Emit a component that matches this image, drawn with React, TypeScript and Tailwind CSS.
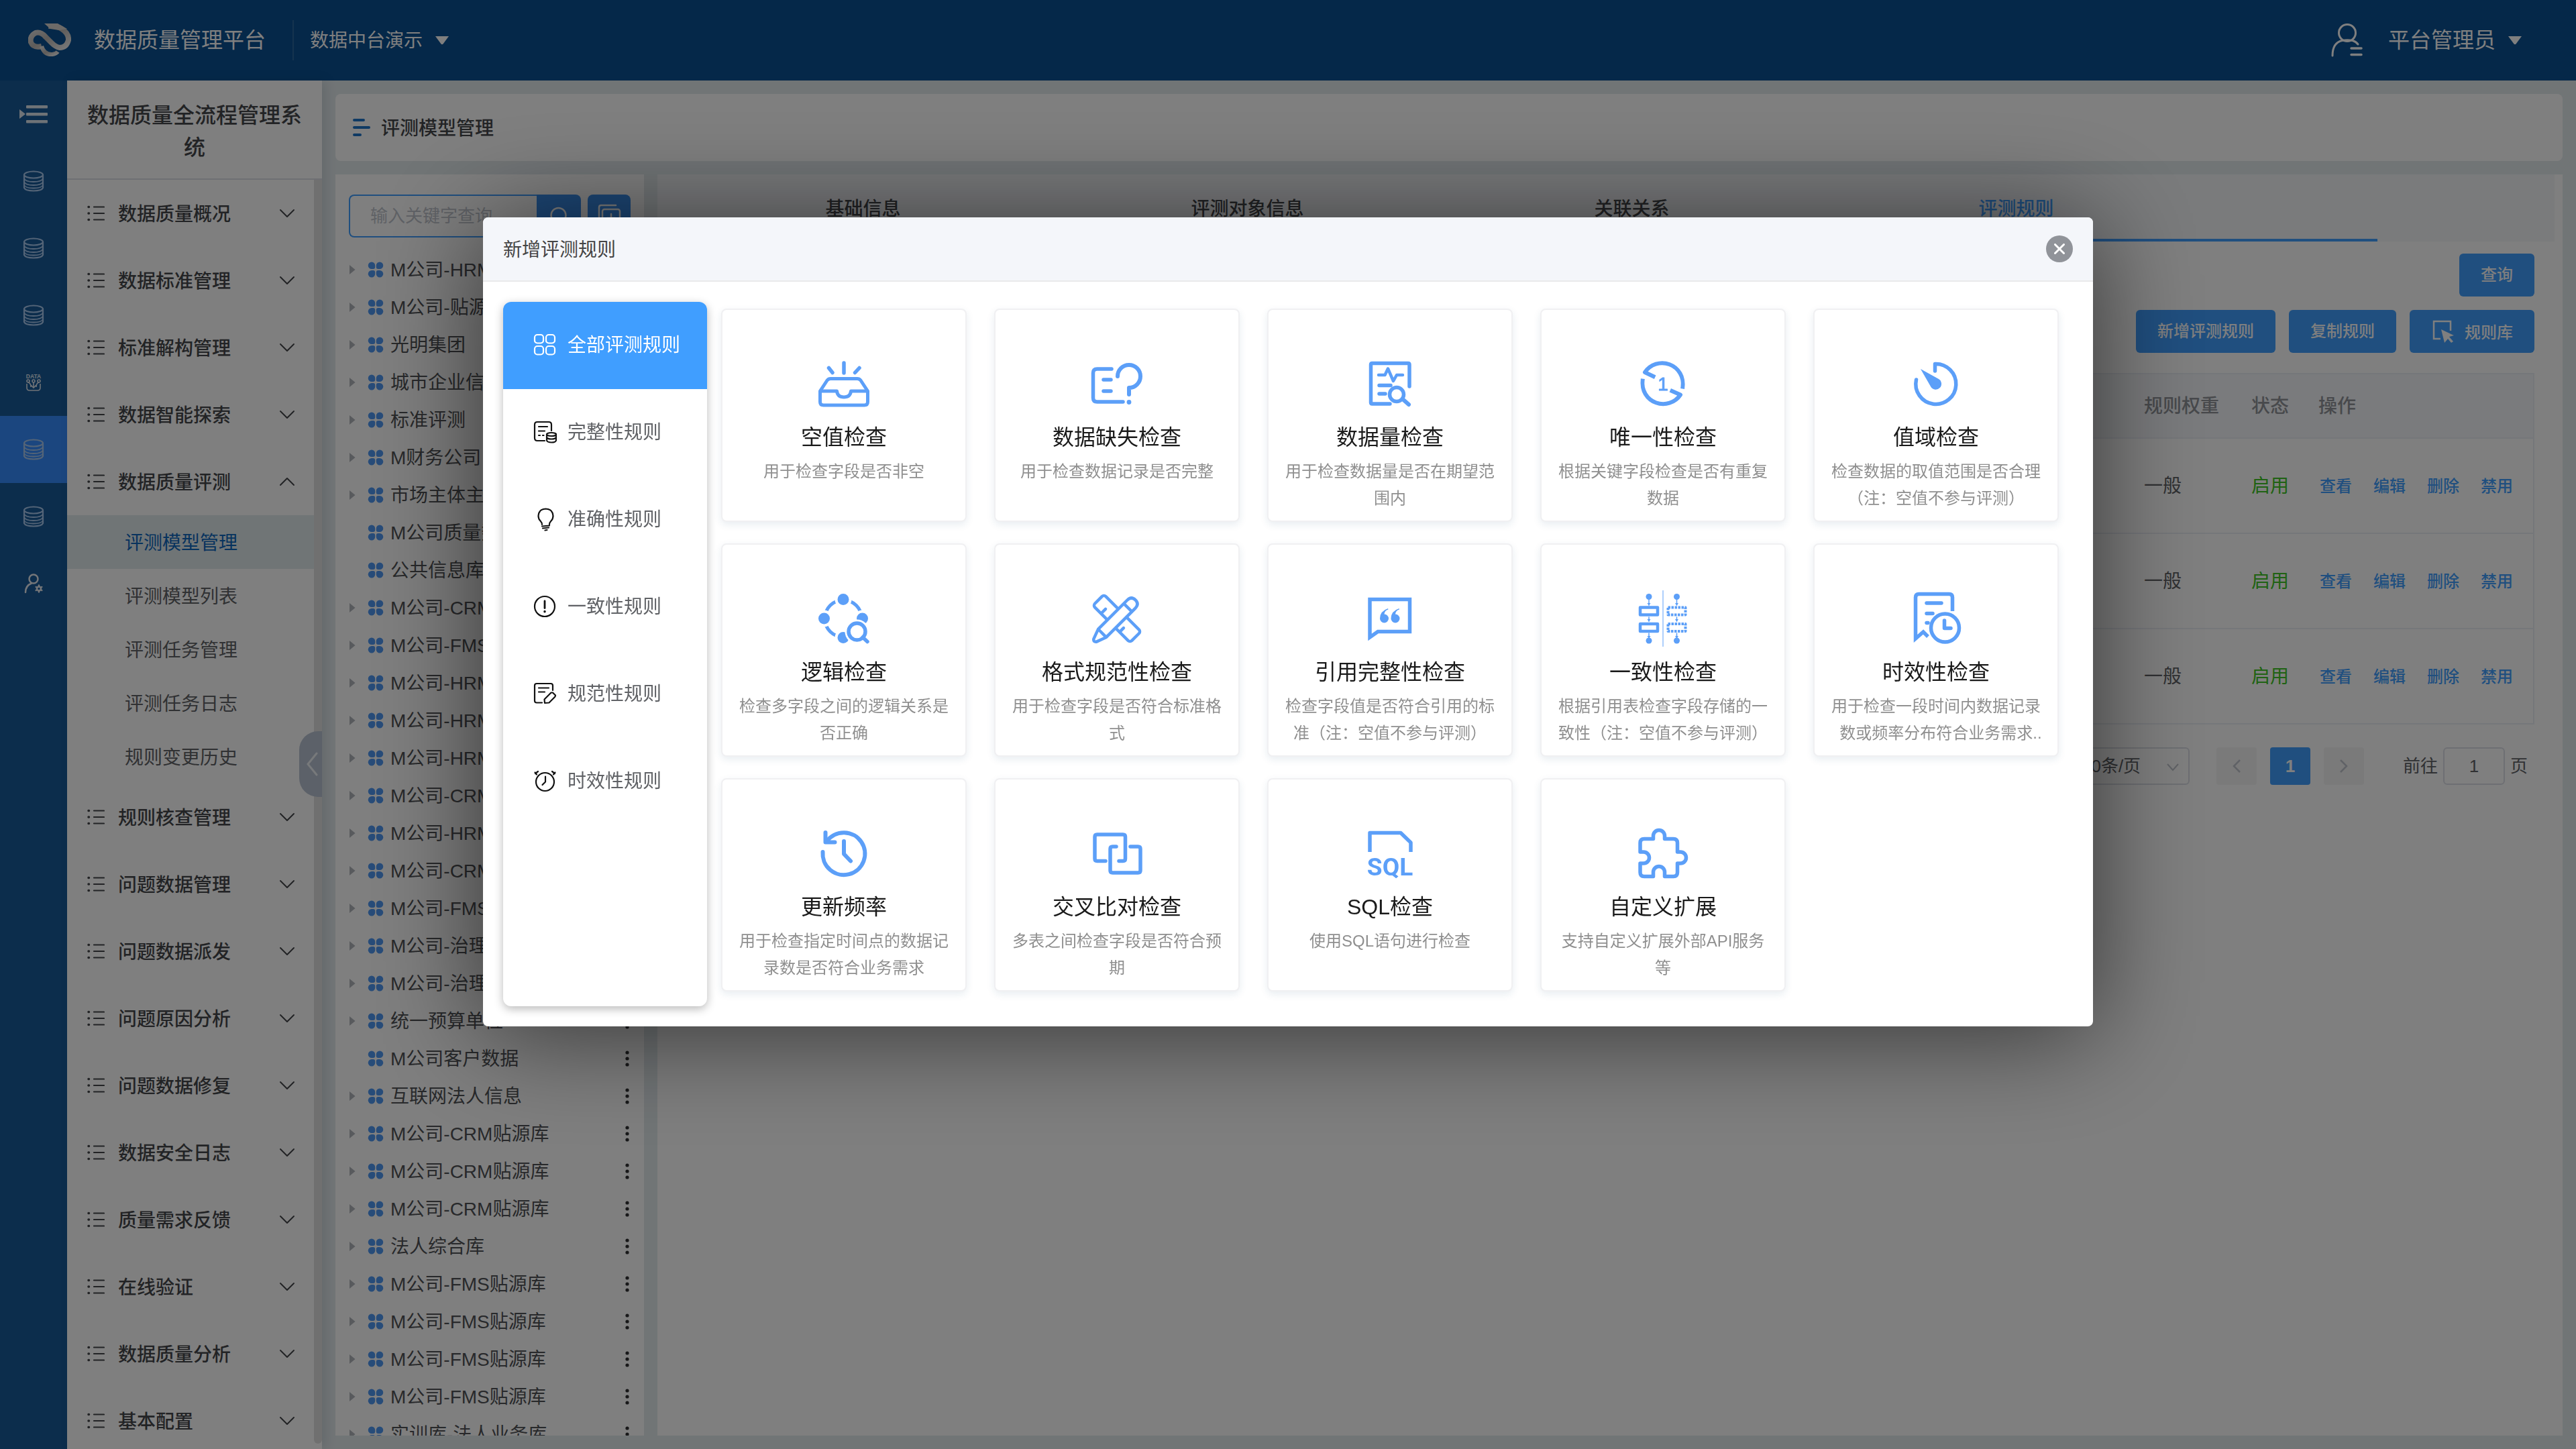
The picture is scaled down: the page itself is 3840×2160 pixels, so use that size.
import { useState, type ReactNode } from "react";
import { clsx, type ClassValue } from "clsx";
import { twMerge } from "tailwind-merge";

function cn(...inputs: ClassValue[]) {
  return twMerge(clsx(inputs));
}

const menuTop = ["数据质量概况", "数据标准管理", "标准解构管理", "数据智能探索"];
const menuBottom = [
  "规则核查管理",
  "问题数据管理",
  "问题数据派发",
  "问题原因分析",
  "问题数据修复",
  "数据安全日志",
  "质量需求反馈",
  "在线验证",
  "数据质量分析",
  "基本配置",
];
const subMenu = ["评测模型管理", "评测模型列表", "评测任务管理", "评测任务日志", "规则变更历史"];

const treeNodes = [
  { name: "M公司-HRM贴源库" },
  { name: "M公司-贴源库" },
  { name: "光明集团" },
  { name: "城市企业信息" },
  { name: "标准评测" },
  { name: "M财务公司" },
  { name: "市场主体主题库" },
  { name: "M公司质量数据", leaf: true },
  { name: "公共信息库", leaf: true },
  { name: "M公司-CRM贴源库" },
  { name: "M公司-FMS贴源库" },
  { name: "M公司-HRM贴源库" },
  { name: "M公司-HRM贴源库" },
  { name: "M公司-HRM贴源库" },
  { name: "M公司-CRM贴源库" },
  { name: "M公司-HRM贴源库" },
  { name: "M公司-CRM贴源库" },
  { name: "M公司-FMS贴源库" },
  { name: "M公司-治理库" },
  { name: "M公司-治理库" },
  { name: "统一预算单位" },
  { name: "M公司客户数据", leaf: true },
  { name: "互联网法人信息" },
  { name: "M公司-CRM贴源库" },
  { name: "M公司-CRM贴源库" },
  { name: "M公司-CRM贴源库" },
  { name: "法人综合库" },
  { name: "M公司-FMS贴源库" },
  { name: "M公司-FMS贴源库" },
  { name: "M公司-FMS贴源库" },
  { name: "M公司-FMS贴源库" },
  { name: "实训库-法人业务库" },
];

/* ---------- small icons ---------- */

function Logo() {
  return (
    <svg viewBox="0 0 64 50" className="h-[50px] w-16" fill="none" strokeLinejoin="round">
      <defs>
        <linearGradient id="logo" x1="0" y1="0" x2="1" y2="1">
          <stop offset="0" stopColor="#e9e9e9" />
          <stop offset="0.5" stopColor="#bdb8b4" />
          <stop offset="1" stopColor="#f0f0f0" />
        </linearGradient>
      </defs>
      <path
        d="M30 4 Q42 3 50 8 Q61 15 60 25 Q57 36 47 36 Q41 35 35 29 L26 20 Q19 12 11 14 Q2 19 4 28 Q8 37 20 34"
        stroke="url(#logo)"
        strokeWidth="8"
      />
      <path d="M20 34 Q24 47 36 46 Q42 45 44 42" stroke="url(#logo)" strokeWidth="6" />
      <path d="M24 0 H44 L58 8 L46 10 L33 8 Z" fill="#d8d4d0" />
    </svg>
  );
}

function Caret() {
  return (
    <svg viewBox="0 0 22 14" className="h-3.5 w-[22px]" fill="currentColor">
      <path d="M1 1 H21 L12.500 12.500 Q11 14 9.500 12.500 Z" />
    </svg>
  );
}

function Chevron({ up }: { up?: boolean }) {
  return (
    <svg viewBox="0 0 24 14" className="h-3.5 w-6" fill="none" stroke="currentColor" strokeWidth="2" strokeLinecap="round" strokeLinejoin="round">
      <path d={up ? "M2 12 L12 2 L22 12" : "M2 2 L12 12 L22 2"} />
    </svg>
  );
}

function ListIcon() {
  return (
    <svg viewBox="0 0 26 24" className="h-6 w-[26px]" fill="none" stroke="currentColor" strokeWidth="2.200" strokeLinecap="round">
      <path d="M10 2.500 H25 M10 12 H25 M10 21.500 H25" />
      <path d="M2 2.500 h.5 M2 12 h.5 M2 21.500 h.5" strokeWidth="3.500" />
    </svg>
  );
}

function DbIcon() {
  return (
    <svg viewBox="0 0 32 32" className="size-8" fill="none" stroke="currentColor" strokeWidth="2.200">
      <ellipse cx="16" cy="6.500" rx="14" ry="5" />
      <path d="M2 6.500 V26 Q4 30.500 16 30.500 Q28 30.500 30 26 V6.500" />
      <path d="M2 12 Q4 17 16 17 Q28 17 30 12 M2 17 Q4 22 16 22 Q28 22 30 17 M2 22 Q4 26.500 16 26.500 Q28 26.500 30 22" strokeWidth="1.800" />
    </svg>
  );
}

function DataIcon() {
  return (
    <svg viewBox="0 0 26 26" className="size-[26px]" fill="none" stroke="currentColor" strokeWidth="1.600">
      <text x="13" y="7" textAnchor="middle" fontSize="8.500" fontWeight="700" fill="currentColor" stroke="none">
        DATA
      </text>
      <circle cx="5" cy="11" r="2" />
      <circle cx="13" cy="11" r="2" />
      <circle cx="21" cy="11" r="2" />
      <path d="M3 15 V21 Q3 25 7 25 H19 Q23 25 23 21 V15 M5 13 Q9 14 9 20 M21 13 Q17 14 17 20 M13 13 V21 M9 17 L13 21 L17 17" />
    </svg>
  );
}

function UserGearIcon() {
  return (
    <svg viewBox="0 0 32 32" className="size-8" fill="none" stroke="currentColor" strokeWidth="2.500" strokeLinecap="round">
      <circle cx="16" cy="9" r="6.500" />
      <path d="M4 29 Q4 19 13 15.500" />
      <circle cx="24" cy="23.500" r="3" />
      <path d="M24 18.500 V19.500 M24 27.500 V28.500 M19.700 21 L20.500 21.500 M27.500 25.500 L28.300 26 M28.300 21 L27.500 21.500 M20.500 25.500 L19.700 26" />
    </svg>
  );
}

function Clover() {
  return (
    <svg viewBox="0 0 24 24" className="size-6 text-[#4f98f2]" fill="currentColor">
      <path d="M6 0.500 a5.200 5.200 0 0 1 5.200 5.200 V8 a3 3 0 0 1 -3 3 H6 A5.200 5.200 0 0 1 6 0.500Z" />
      <path d="M18 0.500 a5.200 5.200 0 0 0 -5.200 5.200 V8 a3 3 0 0 0 3 3 H18 A5.200 5.200 0 0 0 18 0.500Z" />
      <path d="M6 23.500 a5.200 5.200 0 0 0 5.200 -5.200 V16 a3 3 0 0 0 -3 -3 H6 A5.200 5.200 0 0 0 6 23.500Z" />
      <path d="M18 23.500 a5.200 5.200 0 0 1 -5.200 -5.200 V16 a3 3 0 0 1 3 -3 H18 A5.200 5.200 0 0 1 18 23.500Z" />
    </svg>
  );
}

/* ---------- rule category icons, 36 x 36 ---------- */

function NavSvg({ children }: { children: ReactNode }) {
  return (
    <svg viewBox="0 0 36 36" className="size-9" fill="none" stroke="currentColor" strokeWidth="2.200" strokeLinecap="round" strokeLinejoin="round">
      {children}
    </svg>
  );
}

const categories = [
  {
    name: "全部评测规则",
    icon: (
      <NavSvg>
        <rect x="3" y="2" width="13" height="12.500" rx="4" />
        <rect x="20" y="2" width="13" height="12.500" rx="4" />
        <rect x="3" y="19" width="13" height="12.500" rx="4" />
        <rect x="20" y="19" width="13" height="12.500" rx="4" />
      </NavSvg>
    ),
  },
  {
    name: "完整性规则",
    icon: (
      <NavSvg>
        <path d="M18 30 H7 Q3 30 3 26 V6 Q3 2 7 2 H24 Q28 2 28 6 V15" />
        <path d="M9 9 H22 M9 15.500 H18 M9 22 h2 M15 22 h1.500" />
        <ellipse cx="28" cy="20.500" rx="7" ry="2.500" />
        <path d="M21 20.500 V29.500 Q22 32.500 28 32.500 Q34 32.500 35 29.500 V20.500 M21 25 Q22 27.500 28 27.500 Q34 27.500 35 25" />
      </NavSvg>
    ),
  },
  {
    name: "准确性规则",
    icon: (
      <NavSvg>
        <path d="M14 25 Q14 22 11.500 19.500 Q8.500 16.500 8.500 12 Q9 2 19.500 1.500 Q30 2 30.500 12 Q30.500 16.500 27.500 19.500 Q25 22 25 25" />
        <path d="M14 27.500 L25 26.500 M15 30.500 L24 29.500 M18.500 33.500 L21.500 33" />
      </NavSvg>
    ),
  },
  {
    name: "一致性规则",
    icon: (
      <NavSvg>
        <circle cx="18" cy="17" r="15" />
        <path d="M18 9 V19.500" strokeWidth="2.800" />
        <path d="M18 24.500 v.2" strokeWidth="3.400" />
      </NavSvg>
    ),
  },
  {
    name: "规范性规则",
    icon: (
      <NavSvg>
        <path d="M14 30.500 H6 Q3 30.500 3 27.500 V5 Q3 2 6 2 H27 Q30 2 30 5 V12" />
        <path d="M9 8.500 H24 M9 14.500 H18" />
        <path d="M18 31 L17.500 25.500 L27.500 15.500 L30 15.500 L34 19.500 Q34 21 33 22 L24.500 30.500 Z" />
      </NavSvg>
    ),
  },
  {
    name: "时效性规则",
    icon: (
      <NavSvg>
        <circle cx="18.500" cy="18.500" r="13.500" />
        <path d="M19 10.500 V18.500 L14.500 23 M4 6 L8 3 M29 3 L33 6 M3.500 4.500 L6 7.500 M33.500 4.500 L31 7.500" />
      </NavSvg>
    ),
  },
];

/* ---------- rule cards, 84 x 84 icons ---------- */

function CardSvg({ children }: { children: ReactNode }) {
  return (
    <svg viewBox="0 0 84 84" className="size-21 shrink-0 text-[#5c9ff8]" fill="none" stroke="currentColor" strokeWidth="5.500" strokeLinecap="round" strokeLinejoin="round">
      {children}
    </svg>
  );
}

const rules: { name: string; desc: ReactNode; icon: ReactNode }[] = [
  {
    name: "空值检查",
    desc: "用于检查字段是否非空",
    icon: (
      <CardSvg>
        <path d="M42 11 V26 M19.500 18.500 L25 25.500 M65 18.500 L58.500 25.500" />
        <path d="M6.500 53 L17 37 Q19 34.500 22 34.500 H62 Q65 34.500 67 37 L77.500 53 V69 Q77.500 74 72.500 74 H11.500 Q6.500 74 6.500 69 Z" strokeWidth="5" />
        <path d="M7 53 H31.500 Q32.500 62 42 62 Q51.500 62 52.500 53 H77" strokeWidth="5" />
      </CardSvg>
    ),
  },
  {
    name: "数据缺失检查",
    desc: "用于检查数据记录是否完整",
    icon: (
      <CardSvg>
        <path d="M34 20 H12.500 Q6.500 20 6.500 26 V63 Q6.500 69 12.500 69 H51" />
        <path d="M22 36 H33 M22 53 H33" />
        <path d="M43 31 A17 17 0 1 1 60 48 V58" strokeWidth="6" />
        <circle cx="60" cy="69.500" r="3.400" fill="currentColor" stroke="none" />
      </CardSvg>
    ),
  },
  {
    name: "数据量检查",
    desc: "用于检查数据量是否在期望范围内",
    icon: (
      <CardSvg>
        <path d="M71 46 V13.500 Q71 11.500 69 11.500 H15.500 Q13.500 11.500 13.500 13.500 V70 Q13.500 72 15.500 72 H42" />
        <path d="M25 29 H34.500 L39 19.500 L47 38 L52 29 H61" strokeWidth="4.500" />
        <path d="M26 44.500 H43 M26 57 H35" />
        <circle cx="52" cy="58" r="10.500" />
        <path d="M61 65 L70 73" strokeWidth="6" />
      </CardSvg>
    ),
  },
  {
    name: "唯一性检查",
    desc: "根据关键字段检查是否有重复数据",
    icon: (
      <CardSvg>
        <path d="M71.500 46.500 A31 31 0 0 0 15 25 L27.500 31" strokeLinecap="square" strokeWidth="6" />
        <path d="M11.500 37.500 A31 31 0 0 0 68 58.500 L55.500 53" strokeLinecap="square" strokeWidth="6" />
        <text x="42" y="52" textAnchor="middle" fontSize="28" fill="currentColor" stroke="currentColor" strokeWidth="1">
          1
        </text>
      </CardSvg>
    ),
  },
  {
    name: "值域检查",
    desc: "检查数据的取值范围是否合理（注：空值不参与评测）",
    icon: (
      <CardSvg>
        <path d="M40.500 23 V12.500 A30 30 0 1 1 12.500 36" />
        <path d="M19 20 L46 35 A8.500 8.500 0 1 1 34.500 47 Z" fill="currentColor" stroke="none" />
      </CardSvg>
    ),
  },
  {
    name: "逻辑检查",
    desc: "检查多字段之间的逻辑关系是否正确",
    icon: (
      <CardSvg>
        <circle cx="41" cy="42" r="27.500" strokeWidth="5" />
        <g fill="currentColor" stroke="#ffffff" strokeWidth="4">
          <circle cx="41" cy="13.500" r="10.500" />
          <circle cx="12.500" cy="42" r="10.500" />
          <circle cx="69.500" cy="42" r="10.500" />
          <circle cx="41" cy="70.500" r="10.500" />
        </g>
        <circle cx="61.500" cy="61.500" r="18" fill="#ffffff" stroke="none" />
        <circle cx="61.500" cy="61.500" r="12.500" />
        <path d="M70 70 L77 76.500" />
      </CardSvg>
    ),
  },
  {
    name: "格式规范性检查",
    desc: "用于检查字段是否符合标准格式",
    icon: (
      <CardSvg>
        <g strokeWidth="4.500">
          <g transform="rotate(45 42 42)">
            <rect x="3" y="30.500" width="78" height="23" rx="4" />
            <path d="M20 53 V44 M59 53 V45" />
          </g>
          <g transform="rotate(-45 42 42)">
            <path d="M-4 45 Q-8 42 -4 39 L11 33.500 H72 Q81 33.500 81 42 Q81 50.500 72 50.500 H11 Z" fill="#ffffff" />
            <path d="M11 34 V50 M65 34 V50" />
          </g>
        </g>
      </CardSvg>
    ),
  },
  {
    name: "引用完整性检查",
    desc: "检查字段值是否符合引用的标准（注：空值不参与评测）",
    icon: (
      <CardSvg>
        <path d="M12 13.500 H71.500 V61.500 H24 L12 70 Z" strokeLinejoin="miter" />
        <g fill="currentColor" stroke="none">
          <path d="M39 27 Q27 31 27 42 A6.500 6.500 0 1 0 33.500 35.500 Q34 30 39.500 28.500 Z" />
          <path d="M55.500 27 Q43.500 31 43.500 42 A6.500 6.500 0 1 0 50 35.500 Q50.500 30 56 28.500 Z" />
        </g>
      </CardSvg>
    ),
  },
  {
    name: "一致性检查",
    desc: "根据引用表检查字段存储的一致性（注：空值不参与评测）",
    icon: (
      <CardSvg>
        <path d="M42 0 V84" strokeWidth="1" />
        <path d="M21 12 V22 M21 40 V46 M21 64 V71 M62.500 12 V22 M62.500 40 V46 M62.500 64 V71" strokeWidth="1.500" />
        <g fill="currentColor" stroke="none">
          <circle cx="21" cy="9.500" r="4.500" />
          <circle cx="21" cy="75" r="4.500" />
          <circle cx="62.500" cy="9.500" r="4.500" />
          <circle cx="62.500" cy="75" r="4.500" />
          <path d="M18.500 19 h5 l-2.500 4Z M18.500 43 h5 l-2.500 4Z M18.500 68 h5 l-2.500 4Z" />
          <path d="M60 19 h5 l-2.500 4Z M60 43 h5 l-2.500 4Z M60 68 h5 l-2.500 4Z" />
        </g>
        <g strokeWidth="4.500" strokeLinecap="butt">
          <rect x="8" y="25.500" width="26" height="11" />
          <rect x="8" y="50" width="26" height="11" />
          <g strokeDasharray="3.500 1.500" strokeWidth="4">
            <rect x="49.500" y="25.500" width="26" height="11" />
            <rect x="49.500" y="50" width="26" height="11" />
          </g>
        </g>
      </CardSvg>
    ),
  },
  {
    name: "时效性检查",
    desc: (
      <>
        用于检查一段时间内数据记录数或频率分布符合业务需求<span className="-mr-3.5">..</span>
      </>
    ),
    icon: (
      <CardSvg>
        <path d="M66.500 31 V10.500 Q66.500 5.500 61.500 5.500 H16.500 Q11.500 5.500 11.500 10.500 V72 L23 62 L30 69" strokeLinecap="butt" strokeLinejoin="miter" />
        <path d="M28 19 H50 M28 34.500 H37 M28 48.500 H30" />
        <circle cx="55.500" cy="56" r="21" />
        <path d="M54.500 45 V56.500 H64" />
      </CardSvg>
    ),
  },
  {
    name: "更新频率",
    desc: "用于检查指定时间点的数据记录数是否符合业务需求",
    icon: (
      <CardSvg>
        <g strokeWidth="6">
          <path d="M10.500 40 A31.500 31.500 0 1 0 16.500 24" />
          <path d="M14.500 11 V25.500 H28.500" />
          <path d="M42 24 V43 L52 53.500" />
        </g>
      </CardSvg>
    ),
  },
  {
    name: "交叉比对检查",
    desc: "多表之间检查字段是否符合预期",
    icon: (
      <CardSvg>
        <path d="M25 53.500 H12.500 Q9 53.500 9 50 V17.500 Q9 14 12.500 14 H51 Q54.500 14 54.500 17.500 V50 Q54.500 53.500 51 53.500 H45" />
        <path d="M41 32 H35.500 Q32 32 32 35.500 V67.500 Q32 71 35.500 71 H73.500 Q77 71 77 67.500 V35.500 Q77 32 73.500 32 H62" />
      </CardSvg>
    ),
  },
  {
    name: "SQL检查",
    desc: "使用SQL语句进行检查",
    icon: (
      <CardSvg>
        <path d="M12 40 V11.500 H58 L73 26 V40" strokeLinecap="butt" />
        <text x="42" y="75" textAnchor="middle" fontSize="37" fontWeight="700" fontFamily="Roboto, sans-serif" fill="currentColor" stroke="none">
          SQL
        </text>
      </CardSvg>
    ),
  },
  {
    name: "自定义扩展",
    desc: "支持自定义扩展外部API服务等",
    icon: (
      <CardSvg>
        <path d="M27.500 20.500 V16 A8.500 8.500 0 0 1 44.500 16 V20.500 H57.500 Q63.500 20.500 63.500 26.500 V40 H68 A8.500 8.500 0 0 1 68 57 H63.500 V70.500 Q63.500 76.500 57.500 76.500 H44.500 V70 A8.500 8.500 0 0 0 27.500 70 V76.500 H14 Q8 76.500 8 70.500 V57 H13 A8.500 8.500 0 0 0 13 40 H8 V26.500 Q8 20.500 14 20.500 Z" />
      </CardSvg>
    ),
  },
];

/* ---------- page parts ---------- */

function Header() {
  return (
    <header className="flex h-[120px] shrink-0 items-center bg-[#0a5092] pr-20 pl-[42px] text-white">
      <Logo />
      <h1 className="ml-[34px] text-[32px] leading-[48px]">数据质量管理平台</h1>
      <div className="ml-10 h-[60px] w-0.5 bg-[#2a679f]" />
      <button type="button" className="ml-6 flex items-center gap-[18px] text-[28px] leading-10">
        <span className="pt-0.5">数据中台演示</span>
        <Caret />
      </button>
      <button type="button" className="ml-auto flex items-center text-[32px] leading-[48px]">
        <svg viewBox="0 0 50 50" className="mr-9 size-[50px]" fill="none" stroke="currentColor" strokeWidth="3" strokeLinecap="round">
          <circle cx="25" cy="14" r="12.500" />
          <path d="M3 48 Q3 29 17 25.500 Q25 24 33 25.500 Q38 27 41 31" />
          <path d="M31 37 H46 M31 46.500 H46" strokeWidth="3.500" />
        </svg>
        <span className="mr-[18px]">平台管理员</span>
        <Caret />
      </button>
    </header>
  );
}

function Rail() {
  const cell = "flex h-[100px] items-center justify-center";
  return (
    <nav aria-label="应用" className="w-[100px] shrink-0 bg-[#185a99] text-[#a9c9ee]">
      <button type="button" aria-label="展开菜单" className={cn(cell, "w-full text-[#dfe6ee]")}>
        <svg viewBox="0 0 44 28" className="h-7 w-11" fill="currentColor">
          <path d="M1 7 L10 14 L1 21 Z" />
          <rect x="11" y="1" width="32" height="4.500" rx="1" />
          <rect x="11" y="12" width="32" height="4.500" rx="1" />
          <rect x="11" y="23" width="32" height="4.500" rx="1" />
        </svg>
      </button>
      <a href="#db1" aria-label="数据一" className={cell}><DbIcon /></a>
      <a href="#db2" aria-label="数据二" className={cell}><DbIcon /></a>
      <a href="#db3" aria-label="数据三" className={cell}><DbIcon /></a>
      <a href="#data" aria-label="数据四" className={cn(cell, "text-[#dfe6ee]")}><DataIcon /></a>
      <a href="#quality" aria-label="数据质量" className={cn(cell, "bg-[#368cfe]")}><DbIcon /></a>
      <a href="#db4" aria-label="数据五" className={cell}><DbIcon /></a>
      <a href="#user" aria-label="用户" className={cn(cell, "text-[#e6ebf1]")}><UserGearIcon /></a>
    </nav>
  );
}

function MenuItem({ name, open }: { name: string; open?: boolean }) {
  return (
    <button type="button" aria-expanded={!!open} className="flex h-[100px] w-full items-center pr-7 pl-[30px] text-[28px] leading-10 font-medium text-[#45474b]">
      <ListIcon />
      <span className="ml-5 flex-1 pt-1 text-left">{name}</span>
      <Chevron up={open} />
    </button>
  );
}

function Sidebar() {
  return (
    <aside className="relative z-10 flex w-[380px] shrink-0 flex-col bg-white shadow-[6px_0_16px_rgba(0,40,60,0.12)]">
      <h2 className="border-b-2 border-[#dcdfe6] px-6 pt-7 pb-[22px] text-center text-[32px] leading-[48px] font-medium text-[#45474b]">
        数据质量全流程管理系统
      </h2>
      <div className="flex min-h-0 flex-1">
        <nav aria-label="菜单" className="flex-1 overflow-hidden">
          {menuTop.map((name) => (
            <MenuItem key={name} name={name} />
          ))}
          <MenuItem name="数据质量评测" open />
          <ul>
            {subMenu.map((name, i) => (
              <li key={name}>
                <a
                  href="#menu"
                  className={cn(
                    "flex h-20 items-center pt-1 pl-[86px] text-[28px] leading-10 text-[#606266]",
                    i === 0 && "bg-[#e0eaec] text-[#0f67bd]"
                  )}
                >
                  {name}
                </a>
              </li>
            ))}
          </ul>
          {menuBottom.map((name) => (
            <MenuItem key={name} name={name} />
          ))}
        </nav>
        <div className="mb-2 w-3 rounded-b-md bg-[#e1e1e1]" />
      </div>
      {/* collapse handle */}
      <button type="button" aria-label="收起" className="absolute top-[970px] right-0 flex h-[98px] w-[34px] items-center justify-center rounded-l-[28px] bg-[#b9c3d2] text-[#eef2f6]">
        <svg viewBox="0 0 18 36" className="ml-1 h-9 w-[18px]" fill="none" stroke="currentColor" strokeWidth="3" strokeLinecap="round">
          <path d="M16 2 L3 18 L16 34" />
        </svg>
      </button>
    </aside>
  );
}

function TreePanel() {
  return (
    <section className="flex w-[460px] shrink-0 flex-col bg-white px-5 pt-[30px]">
      <form className="flex gap-2.5" onSubmit={(e) => e.preventDefault()}>
        <div className="flex flex-1">
          <input
            type="search"
            aria-label="输入关键字查询"
            placeholder="输入关键字查询"
            className="h-16 w-[280px] rounded-l-lg border-2 border-r-0 border-[#409eff] px-[30px] text-[26px] text-[#606266] placeholder-[#c0c4cc] outline-none"
          />
          <button type="submit" aria-label="搜索" className="flex h-16 w-[66px] items-center justify-center rounded-r-lg bg-[#3a8fee] text-white">
            <svg viewBox="0 0 28 28" className="size-7" fill="none" stroke="currentColor" strokeWidth="2.500" strokeLinecap="round">
              <circle cx="13.500" cy="13" r="11" />
              <path d="M21.500 21 L26.500 26" />
            </svg>
          </button>
        </div>
        <button type="button" aria-label="新增" className="flex size-16 items-center justify-center rounded-lg bg-[#3a8fee] text-white">
          <svg viewBox="0 0 36 36" className="size-9" fill="none" stroke="currentColor" strokeWidth="2.500" strokeLinecap="round">
            <path d="M3 27 V5 Q3 2 6 2 H28" />
            <rect x="8" y="8" width="26" height="26" rx="3" />
            <path d="M21 15 V27 M15 21 H27" />
          </svg>
        </button>
      </form>
      <ul className="mt-5 min-h-0 flex-1 overflow-hidden">
        {treeNodes.map((node, i) => (
          <li key={i} className="flex h-14 items-center text-[28px] leading-10 text-[#505256]">
            <svg viewBox="0 0 10 16" className={cn("mr-[18px] h-4 w-2.5 text-[#b0b4bb]", node.leaf && "invisible")} fill="currentColor">
              <path d="M1 1 L9.500 8 L1 15 Z" />
            </svg>
            <Clover />
            <span className="ml-2.5 flex-1 pt-0.5 whitespace-nowrap">{node.name}</span>
            <svg viewBox="0 0 6 24" className="mr-0.5 h-6 w-1.5 text-[#303133]" fill="currentColor">
              <circle cx="3" cy="3" r="2.600" />
              <circle cx="3" cy="12" r="2.600" />
              <circle cx="3" cy="21" r="2.600" />
            </svg>
          </li>
        ))}
      </ul>
    </section>
  );
}

function Pagination() {
  const arrow = "flex h-14 w-[60px] items-center justify-center rounded-sm bg-[#f4f4f5] text-[#c0c4cc]";
  return (
    <div className="mt-[34px] flex items-center justify-end pr-2.5 text-[26px] leading-10 text-[#606266]">
      <label className="relative block text-[#606266]">
        <span className="sr-only">每页条数</span>
        <select className="h-14 w-[200px] appearance-none rounded-md border-2 border-[#dcdfe6] bg-white pl-[37px]">
          <option>20条/页</option>
        </select>
        <svg viewBox="0 0 18 12" className="absolute top-6 right-4 h-3 w-[18px] text-[#c0c4cc]" fill="none" stroke="currentColor" strokeWidth="2">
          <path d="M1 1 L9 10 L17 1" />
        </svg>
      </label>
      <button type="button" aria-label="上一页" className={cn(arrow, "ml-10")}>
        <svg viewBox="0 0 12 20" className="h-5 w-3" fill="none" stroke="currentColor" strokeWidth="2.500">
          <path d="M11 1 L2 10 L11 19" />
        </svg>
      </button>
      <button type="button" className="mx-5 h-14 w-[60px] rounded-sm bg-[#409eff] font-bold text-white">1</button>
      <button type="button" aria-label="下一页" className={arrow}>
        <svg viewBox="0 0 12 20" className="h-5 w-3" fill="none" stroke="currentColor" strokeWidth="2.500">
          <path d="M1 1 L10 10 L1 19" />
        </svg>
      </button>
      <label className="ml-[58px] flex items-center gap-2">
        前往
        <input type="text" defaultValue="1" className="h-14 w-[92px] rounded-md border-2 border-[#dcdfe6] bg-white text-center" />
        页
      </label>
    </div>
  );
}

function MainPanel() {
  const btn = "flex h-16 items-center rounded-md bg-[#409eff] px-8 text-[24px] leading-10 font-medium text-white";
  return (
    <section className="min-w-0 flex-1 bg-white">
      <div className="relative mr-3 flex h-[100px] bg-[#f4f6f9] pl-5 text-[28px] leading-10 font-medium text-[#45474b]">
        {["基础信息", "评测对象信息", "关联关系"].map((tab) => (
          <button key={tab} type="button" className="w-[573px] pt-1">
            {tab}
          </button>
        ))}
        <button type="button" className="w-[573px] pt-1 text-[#409eff]">
          评测规则
        </button>
        <div className="absolute right-[264px] bottom-0 h-1 w-[573px] bg-[#409eff]" />
      </div>
      <div className="pr-[42px] pl-5">
        <div className="mt-[18px] flex justify-end">
          <button type="button" className={btn}>查询</button>
        </div>
        <div className="mt-5 flex justify-end gap-5">
          <button type="button" className={btn}>新增评测规则</button>
          <button type="button" className={btn}>复制规则</button>
          <button type="button" className={btn}>
            <svg viewBox="0 0 36 36" className="mr-3.5 size-9" fill="none" stroke="currentColor" strokeWidth="2.500">
              <path d="M14 29 H4 V3 H29 V17" />
              <path d="M15 15 L34 24 L27 26 L33 33 L30 35 L25 29 L20 35 Z" fill="currentColor" stroke="none" />
            </svg>
            <span className="pt-1">规则库</span>
          </button>
        </div>
        <table className="mt-[30px] w-full table-fixed border-collapse border-2 border-[#ebeef5] text-left text-[28px] leading-10">
          <thead className="bg-[#f5f7fa] text-[#909399]">
            <tr className="h-24 border-b-2 border-[#ebeef5]">
              <th />
              <th className="w-40 pt-0.5 pl-5 font-medium">规则权重</th>
              <th className="w-[100px] pt-0.5 pl-5 font-medium">状态</th>
              <th className="w-[341px] pt-0.5 pl-5 font-medium">操作</th>
            </tr>
          </thead>
          <tbody className="text-[#606266]">
            {[1, 2, 3].map((row) => (
              <tr key={row} className="h-[142px] border-b-2 border-[#ebeef5]">
                <td />
                <td className="pt-0.5 pl-5">一般</td>
                <td className="pt-0.5 pl-5 text-[#3fc426]">启用</td>
                <td className="pt-0.5 pl-[22px]">
                  <div className="flex gap-8 text-[24px] font-medium">
                    <a href="#view" className="text-[#409eff]">查看</a>
                    <a href="#edit" className="text-[#409eff]">编辑</a>
                    <a href="#delete" className="text-[#409eff]">删除</a>
                    <a href="#disable" className="text-[#409eff]">禁用</a>
                  </div>
                </td>
              </tr>
            ))}
          </tbody>
        </table>
        <Pagination />
      </div>
    </section>
  );
}

function RuleDialog({ onClose }: { onClose: () => void }) {
  const [active, setActive] = useState(0);

  return (
    <div className="fixed inset-0 z-50 flex items-start justify-center bg-black/50 pt-[15vh]">
      <div
        role="dialog"
        aria-label="新增评测规则"
        className="w-[62.5%] overflow-hidden rounded-lg bg-white shadow-[0_10px_160px_rgba(0,0,0,0.6)]"
      >
        <div className="flex h-24 items-center justify-between border-b-2 border-[#e9e9eb] bg-[#f4f6fa] px-[30px]">
          <h3 className="pt-1 text-[28px] leading-10 text-[#444]">新增评测规则</h3>
          <button type="button" aria-label="关闭" onClick={onClose} className="flex size-10 items-center justify-center rounded-full bg-[#909399] text-white">
            <svg viewBox="0 0 16 16" className="size-4" fill="none" stroke="currentColor" strokeWidth="3" strokeLinecap="round">
              <path d="M1.500 1.500 L14.500 14.500 M14.500 1.500 L1.500 14.500" />
            </svg>
          </button>
        </div>
        <div className="flex gap-[21px] p-[30px] pr-[51px]">
          <nav aria-label="规则分类" className="h-[1050px] w-[304px] shrink-0 overflow-hidden rounded-xl bg-white shadow-[0_4px_14px_rgba(0,0,0,0.28)]">
            {categories.map((item, i) => (
              <button
                key={item.name}
                type="button"
                onClick={() => setActive(i)}
                className={cn("flex h-[130px] w-full items-center pl-11 text-[28px] leading-10", i === active ? "bg-[#409eff] text-white" : "text-[#111]")}
              >
                {item.icon}
                <span className={cn("ml-4", i !== active && "text-[#606266]")}>{item.name}</span>
              </button>
            ))}
          </nav>
          <div className="grid flex-1 grid-cols-5 content-start gap-x-[41px] gap-y-8 pt-2.5">
            {rules.map((rule) => (
              <button
                key={rule.name}
                type="button"
                className="flex h-[318px] flex-col items-center rounded-lg border-2 border-[#f0f0f2] bg-white px-5 pt-[68px] shadow-[0_4px_12px_rgba(30,80,120,0.10)]"
              >
                {rule.icon}
                <span className="mt-[18px] text-[32px] leading-10 text-[#1a1a1a]">{rule.name}</span>
                <span className="mt-[11px] text-center text-[24px] leading-10 text-[#8f8f8f]">{rule.desc}</span>
              </button>
            ))}
          </div>
        </div>
      </div>
    </div>
  );
}

export default function App() {
  const [open, setOpen] = useState(true);

  return (
    <div className="flex h-screen flex-col overflow-hidden bg-[#e3eaed] font-['Liberation_Sans','Noto_Sans_CJK_SC',sans-serif]">
      <Header />
      <div className="flex min-h-0 flex-1">
        <Rail />
        <Sidebar />
        <main className="flex min-w-0 flex-1 flex-col gap-5 p-5">
          <div className="flex h-[100px] shrink-0 items-center rounded-lg bg-white px-[26px] text-[28px] leading-10 font-medium text-[#45474b]">
            <svg viewBox="0 0 26 28" className="mr-4 h-7 w-[26px] text-[#1f74c9]" fill="none" stroke="currentColor" strokeWidth="4" strokeLinecap="round">
              <path d="M2 3 H16 M2 14 H24 M2 25 H11" />
            </svg>
            <span className="pt-1">评测模型管理</span>
          </div>
          <div className="flex min-h-0 flex-1 gap-5">
            <TreePanel />
            <MainPanel />
          </div>
        </main>
      </div>
      {open && <RuleDialog onClose={() => setOpen(false)} />}
    </div>
  );
}
